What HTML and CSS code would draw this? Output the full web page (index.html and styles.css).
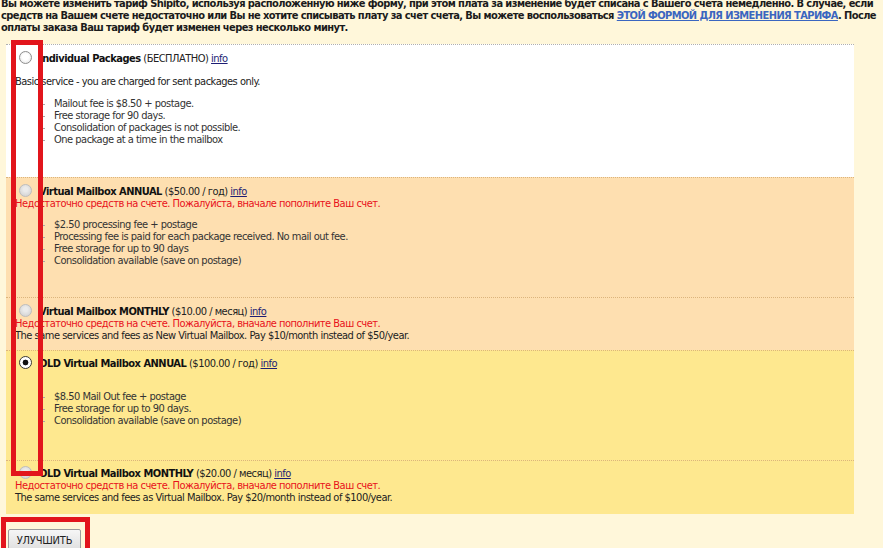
FILE: index.html
```html
<!DOCTYPE html>
<html lang="ru">
<head>
<meta charset="utf-8">
<title>Изменение тарифа</title>
<link rel="stylesheet" href="styles.css">
</head>
<body>
<p class="intro">Вы можете изменить тариф Shipito, используя расположенную ниже форму, при этом плата за изменение будет списана с Вашего счета немедленно. В случае, если<br>средств на Вашем счете недостаточно или Вы не хотите списывать плату за счет счета, Вы можете воспользоваться <a href="#">ЭТОЙ ФОРМОЙ ДЛЯ ИЗМЕНЕНИЯ ТАРИФА</a>. После<br>оплаты заказа Ваш тариф будет изменен через несколько минут.</p>
<form class="plans">
  <div class="plan plan-free">
    <label class="head"><input type="radio" name="plan" class="radio"><span class="title">Individual Packages</span>&nbsp;<span class="price">(БЕСПЛАТНО)</span>&nbsp;<a href="#" class="info">info</a></label>
    <div class="desc desc-free">Basic service - you are charged for sent packages only.</div>
    <ul class="features features-free">
      <li>Mailout fee is $8.50 + postage.</li>
      <li>Free storage for 90 days.</li>
      <li>Consolidation of packages is not possible.</li>
      <li>One package at a time in the mailbox</li>
    </ul>
  </div>
  <div class="plan plan-orange">
    <label class="head"><input type="radio" name="plan" class="radio" disabled><span class="title">Virtual Mailbox ANNUAL</span>&nbsp;<span class="price">($50.00 / год)</span>&nbsp;<a href="#" class="info">info</a></label>
    <div class="warn">Недостаточно средств на счете. Пожалуйста, вначале пополните Ваш счет.</div>
    <ul class="features">
      <li>$2.50 processing fee + postage</li>
      <li>Processing fee is paid for each package received. No mail out fee.</li>
      <li>Free storage for up to 90 days</li>
      <li>Consolidation available (save on postage)</li>
    </ul>
  </div>
  <div class="plan plan-orange">
    <label class="head"><input type="radio" name="plan" class="radio" disabled><span class="title">Virtual Mailbox MONTHLY</span>&nbsp;<span class="price">($10.00 / месяц)</span>&nbsp;<a href="#" class="info">info</a></label>
    <div class="warn">Недостаточно средств на счете. Пожалуйста, вначале пополните Ваш счет.</div>
    <div class="desc">The same services and fees as New Virtual Mailbox. Pay $10/month instead of $50/year.</div>
  </div>
  <div class="plan plan-yellow">
    <label class="head"><input type="radio" name="plan" class="radio" checked><span class="title">OLD Virtual Mailbox ANNUAL</span>&nbsp;<span class="price">($100.00 / год)</span>&nbsp;<a href="#" class="info">info</a></label>
    <div class="blank"></div>
    <ul class="features features-old">
      <li>$8.50 Mail Out fee + postage</li>
      <li>Free storage for up to 90 days.</li>
      <li>Consolidation available (save on postage)</li>
    </ul>
  </div>
  <div class="plan plan-yellow plan-last">
    <label class="head"><input type="radio" name="plan" class="radio" disabled><span class="title">OLD Virtual Mailbox MONTHLY</span>&nbsp;<span class="price">($20.00 / месяц)</span>&nbsp;<a href="#" class="info">info</a></label>
    <div class="warn">Недостаточно средств на счете. Пожалуйста, вначале пополните Ваш счет.</div>
    <div class="desc">The same services and fees as Virtual Mailbox. Pay $20/month instead of $100/year.</div>
  </div>
</form>
<button type="button" class="upgrade">УЛУЧШИТЬ</button>
<div class="mark mark-radios"></div>
<div class="mark mark-button"></div>
</body>
</html>
```
FILE: styles.css
```css
html, body {
  margin: 0;
  padding: 0;
}
body {
  position: relative;
  width: 883px;
  height: 548px;
  overflow: hidden;
  background: #fff7da;
  font-family: "DejaVu Sans Condensed", "DejaVu Sans", sans-serif;
  font-stretch: condensed;
  font-size: 11px;
  letter-spacing: -0.5px;
  color: #222;
}
.intro {
  margin: -2px 0 0 1px;
  font-weight: bold;
  line-height: 12px;
  letter-spacing: -0.58px;
  white-space: nowrap;
  color: #1b1b1b;
}
.intro a {
  color: #3a66c0;
  text-decoration: underline;
}
.plans {
  margin: 10px 0 0 6px;
  width: 848px;
}
.plan {
  border-top: 1px dotted #dcb47c;
  padding: 6.5px 0 8px 9px;
}
.plan-free {
  background: #ffffff;
  border-top-color: #b0b0b0;
}
.plan-orange {
  background: #fedfb0;
}
.plan-yellow {
  background: #fee88f;
}
.plan-last {
  padding-bottom: 9.5px;
}
.head {
  display: flex;
  align-items: center;
  height: 13px;
  line-height: 13px;
  white-space: nowrap;
}
.radio {
  appearance: none;
  -webkit-appearance: none;
  flex: none;
  box-sizing: border-box;
  width: 13px;
  height: 13px;
  margin: -2px 7px 0 4px;
  border-radius: 50%;
  border: 1px solid #8d8d8d;
  background: radial-gradient(circle at 50% 45%, #ffffff 0 3px, #ececec 6px);
}
.radio:disabled {
  border-color: #bdbdbd;
  background: radial-gradient(circle at 50% 40%, #ebebeb 0 2px, #d8d8d8 6px);
}
.radio:checked {
  border-color: #3a3a3a;
  background: radial-gradient(circle, #111111 0 2.6px, #ffffff 3.2px);
}
.title {
  font-weight: bold;
  color: #111;
}
.price {
  color: #222;
}
.info {
  color: #1d1d74;
  text-decoration: underline;
}
.warn {
  line-height: 12px;
  color: #e8111b;
}
.desc {
  line-height: 12px;
  color: #222;
}
.desc-free {
  margin-top: 11px;
}
.blank {
  height: 12px;
}
.features {
  margin: 9px 0 22.5px;
  padding: 0 0 0 39px;
  list-style: none;
  line-height: 12px;
  color: #333;
}
.features-free {
  margin: 10px 0 23.5px;
}
.features-old {
  margin-bottom: 24.5px;
}
.features li {
  position: relative;
}
.features li::before {
  content: "";
  position: absolute;
  left: -11px;
  top: 6px;
  width: 2px;
  height: 1px;
  background: #a8a8a8;
}
.upgrade {
  display: block;
  box-sizing: border-box;
  width: 73px;
  height: 23px;
  margin: 15px 0 0 8px;
  padding: 0;
  border: 1px solid #9c9c9c;
  border-radius: 2px;
  background: linear-gradient(#f6f6f6, #dedede);
  font-family: inherit;
  font-stretch: condensed;
  font-size: 11px;
  letter-spacing: -0.2px;
  color: #222;
}
.mark {
  position: absolute;
  box-sizing: border-box;
  border: 5px solid #e2151c;
  pointer-events: none;
}
.mark-radios {
  left: 11px;
  top: 40px;
  width: 32px;
  height: 436px;
}
.mark-button {
  left: 1px;
  top: 517px;
  width: 89px;
  height: 40px;
}
```
